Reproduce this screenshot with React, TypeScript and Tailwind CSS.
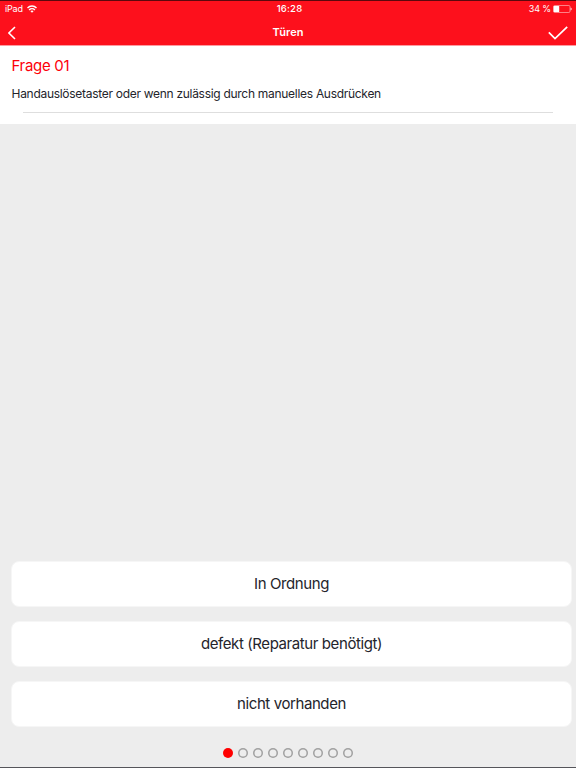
import React from 'react';

interface AnswerButtonProps {
  label: string;
}

const answers: AnswerButtonProps[] = [
  { label: 'In Ordnung' },
  { label: 'defekt (Reparatur benötigt)' },
  { label: 'nicht vorhanden' },
];

const questionCount = 9;

const WifiIcon: React.FC = () => (
  <svg className="h-[8px] w-[10px]" viewBox="0 0 10 8" fill="none" stroke="currentColor" strokeWidth="1.4">
    <path d="M.5 3C3 .4 7 .4 9.5 3" />
    <path d="M2.1 4.9C3.7 3.3 6.3 3.3 7.9 4.9" />
    <path d="M5 7.8 3.3 6.1C4.2 5.2 5.8 5.2 6.7 6.1Z" fill="currentColor" stroke="none" />
  </svg>
);

const BatteryIcon: React.FC = () => (
  <svg className="h-[8px] w-[19px]" viewBox="0 0 19 8">
    <rect x=".5" y=".5" width="16.5" height="7" rx="1.2" fill="none" stroke="white" strokeOpacity=".6" strokeWidth=".8" />
    <rect x=".7" y="1" width="5.5" height="6" rx=".5" fill="white" />
    <path d="M17.6 2.4C19 2.8 19 5.2 17.6 5.6Z" fill="white" />
  </svg>
);

const StatusBar: React.FC = () => (
  <div className="grid h-[15px] grid-cols-3 items-center pl-[5px] pr-[4px] text-[9px] leading-[15px]">
    <div className="flex items-center gap-[5px]">
      <span className="w-[17px] whitespace-nowrap tracking-[-0.2px]">iPad</span>
      <WifiIcon />
    </div>
    <span className="pl-[2px] text-center text-[9.5px] font-medium tracking-[0.2px]">16:28</span>
    <div className="flex items-center justify-end gap-[2px]">
      <span className="tracking-[-0.15px]">34 %</span>
      <BatteryIcon />
    </div>
  </div>
);

const NavBar: React.FC = () => (
  <div className="grid h-[29px] grid-cols-3 items-center px-[8px]">
    <svg className="mt-[4px] h-[14px] w-[8px]" viewBox="0 0 8 14" fill="none" stroke="currentColor" strokeWidth="1.6">
      <path d="M7 1 .9 7 7 13" />
    </svg>
    <h1 className="mt-[3px] text-center text-[11px] font-semibold leading-[16px]">Türen</h1>
    <svg className="mt-[4px] h-[14px] w-[20px] justify-self-end" viewBox="0 0 20 14" fill="none" stroke="currentColor" strokeWidth="1.7">
      <path d="M.8 6.4 7 12.6 19.2.8" />
    </svg>
  </div>
);

const AnswerButton: React.FC<AnswerButtonProps> = ({ label }) => (
  <button className="flex h-[46px] w-full items-center justify-center rounded-[8px] border border-[#f6f6f6] bg-white text-[15px] tracking-[-0.41px] text-[#24242b]">
    {label}
  </button>
);

export default function App() {
  return (
    <div className="flex h-[768px] w-[576px] flex-col overflow-hidden border-b border-t border-b-[#55555a] border-t-[#5c080d] bg-[#ededed] font-['Inter','Liberation_Sans',sans-serif]">
      <header className="h-[45px] border-b border-[#fd9aa0] bg-[#fd101c] text-white">
        <StatusBar />
        <NavBar />
      </header>

      <section className="h-[78px] bg-white">
        <h2 className="ml-[11.5px] pt-[10px] text-[15px] leading-[20px] tracking-[-0.3px] text-[#fd0009]">Frage 01</h2>
        <p className="ml-[11.5px] mt-[10px] text-[12px] leading-[16px] tracking-[-0.29px] text-[#24242b]">
          Handauslösetaster oder wenn zulässig durch manuelles Ausdrücken
        </p>
        <hr className="mx-[23px] mt-[10px] border-[#dedede]" />
      </section>

      <div className="mt-auto flex flex-col gap-[14px] pl-[11px] pr-[4px]">
        {answers.map((answer) => (
          <AnswerButton key={answer.label} {...answer} />
        ))}
      </div>

      <div className="mb-[9.5px] mt-[20.5px] flex justify-center gap-[5px]">
        {Array.from({ length: questionCount }, (_, i) => (
          <span
            key={i}
            className={`h-[10px] w-[10px] rounded-full ${i === 0 ? 'bg-[#ff0000]' : 'shadow-[inset_0_0_0_1.5px_#a0a0a0]'}`}
          />
        ))}
      </div>
    </div>
  );
}
